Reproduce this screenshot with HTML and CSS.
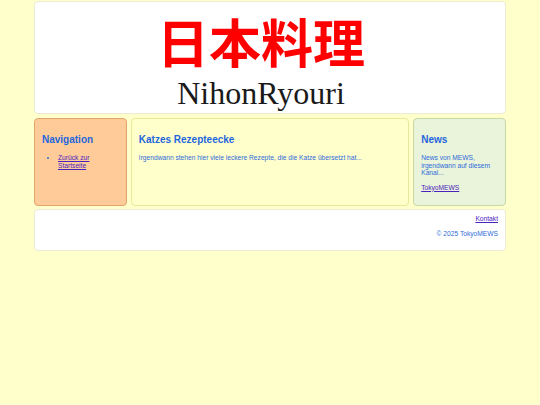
FILE: index.html
```html
<!DOCTYPE html>
<html lang="de">
<head>
<meta charset="utf-8">
<title>NihonRyouri</title>
<link rel="stylesheet" href="styles.css">
</head>
<body>
<div class="page">
  <header class="header">
    <h1 class="title" lang="ja">日本料理</h1>
    <p class="subtitle">NihonRyouri</p>
  </header>
  <div class="columns">
    <nav class="box nav">
      <h2 class="box-title">Navigation</h2>
      <ul class="nav-list">
        <li><a href="#">Zurück zur Startseite</a></li>
      </ul>
    </nav>
    <main class="box main">
      <h2 class="box-title">Katzes Rezepteecke</h2>
      <p class="text">Irgendwann stehen hier viele leckere Rezepte, die die Katze übersetzt hat...</p>
    </main>
    <aside class="box news">
      <h2 class="box-title">News</h2>
      <p class="text">News von MEWS, irgendwann auf diesem Kanal...</p>
      <p class="text"><a href="#">TokyoMEWS</a></p>
    </aside>
  </div>
  <footer class="footer">
    <p class="footer-line"><a href="#">Kontakt</a></p>
    <p class="footer-line">© 2025 TokyoMEWS</p>
  </footer>
</div>
</body>
</html>
```
FILE: styles.css
```css
html, body {
  margin: 0;
  padding: 0;
  background: #ffffcc;
}
body {
  font-family: "Liberation Sans", Arial, sans-serif;
  font-size: 6.67px;
  line-height: 7.5px;
  color: #2f6bdb;
}
.page {
  width: 472px;
  margin: 1px auto 0;
}
.header {
  box-sizing: border-box;
  height: 113px;
  background: #ffffff;
  border: 1px solid #ebebd6;
  border-radius: 4px;
  padding: 13px 18px 0 0;
  text-align: center;
}
.title {
  margin: 0;
  font-family: "Liberation Sans", "Noto Sans CJK JP", sans-serif;
  font-weight: 700;
  font-size: 52px;
  line-height: 60px;
  color: #ff0000;
}
.subtitle {
  margin: 0;
  font-family: "Liberation Serif", "Times New Roman", serif;
  font-size: 32px;
  line-height: 37px;
  color: #1a1a1a;
}
.columns {
  display: grid;
  grid-template-columns: 1fr 3fr 1fr;
  gap: 4px;
  margin-top: 4px;
  height: 87px;
}
.box {
  box-sizing: border-box;
  border-radius: 4px;
  padding: 8px 7px 7px;
}
.nav {
  background: #ffcc99;
  border: 1px solid #e0a56c;
}
.main {
  background: #ffffcc;
  border: 1px solid #e8e89a;
}
.news {
  background: #eaf4da;
  border: 1px solid #c6d8a6;
}
.box-title {
  margin: 7px 0 8px;
  font-size: 10px;
  line-height: 12px;
  font-weight: 700;
  color: #1f66dd;
}
.text {
  margin: 0 0 7px;
}
.nav-list {
  margin: 0;
  padding-left: 16px;
}
a {
  color: #4a22c0;
  text-decoration: underline;
}
.footer {
  box-sizing: border-box;
  height: 42px;
  margin-top: 4px;
  background: #ffffff;
  border: 1px solid #ebebd6;
  border-radius: 4px;
  padding: 5px 7px;
  text-align: right;
}
.footer-line {
  margin: 0 0 7px;
}
```
